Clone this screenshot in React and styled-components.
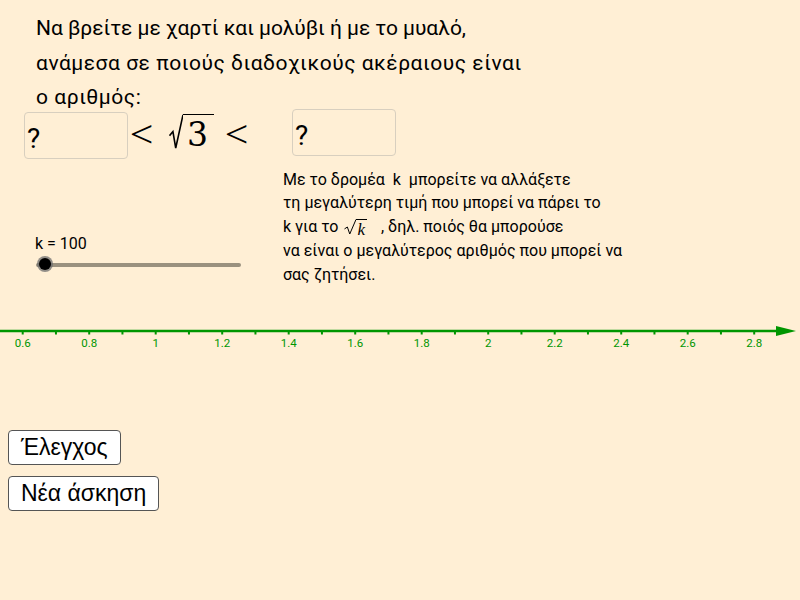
import React from "react";
import styled, { createGlobalStyle } from "styled-components";

const Global = createGlobalStyle`
  html, body { margin: 0; padding: 0; background: #FFEFD5; }
  body { font-family: Roboto, "Noto Sans", sans-serif; color: #000; }
`;

const Page = styled.div`
  width: 800px;
  height: 600px;
  background: #FFEFD5;
  overflow: hidden;
  display: flex;
  flex-direction: column;
`;

const Title = styled.div`
  padding: 11px 0 0 36px;
  font-family: Roboto, sans-serif;
  font-size: 21px;
  line-height: 34.5px;
`;

const TitleLine = styled.div`
  letter-spacing: ${(p) => p.$spacing || 0}px;
  white-space: nowrap;
`;

const AnswerRow = styled.div`
  display: flex;
  align-items: flex-start;
  margin-top: -6px;
  height: 50px;
`;

const AnswerBox = styled.div`
  box-sizing: border-box;
  width: 104px;
  height: 47px;
  margin-left: ${(p) => p.$left}px;
  margin-top: ${(p) => p.$top}px;
  border: 1px solid #d8cfbf;
  border-radius: 4px;
  padding: 12px 0 0 2px;
  font-family: Roboto, sans-serif;
  font-size: 28px;
  line-height: 1;
`;

const MathExpr = styled.div`
  display: flex;
  align-items: flex-start;
  margin: 5px 0 0 2px;
  width: 124px;
  height: 40px;
`;

const Rel = styled.span`
  display: inline-block;
  width: 23px;
  margin-top: ${(p) => p.$top}px;
  text-align: center;
  font-family: "Liberation Serif", "DejaVu Serif", serif;
  font-size: 38px;
  line-height: 1;
  transform: scaleX(1.1);
`;

const Sqrt = styled.span`
  display: inline-flex;
  align-items: flex-start;
  margin: 0 ${(p) => p.$mr || 0}px 0 ${(p) => p.$ml || 0}px;
  vertical-align: ${(p) => p.$va || "baseline"};
`;

const Radicand = styled.span`
  border-top: ${(p) => p.$thick}px solid #000;
  padding: ${(p) => p.$pt}px ${(p) => p.$pr}px 0 ${(p) => p.$pl}px;
  line-height: 1;
  font-size: ${(p) => p.$size}px;
  font-style: ${(p) => (p.$italic ? "italic" : "normal")};
  font-family: ${(p) =>
    p.$italic ? `"Liberation Serif", "DejaVu Serif", serif` : `"DejaVu Serif", "Liberation Serif", serif`};
`;

const Middle = styled.div`
  display: flex;
  margin-top: 9px;
`;

const SliderCol = styled.div`
  width: 283px;
  padding-top: 67px;
  box-sizing: border-box;
`;

const SliderLabel = styled.div`
  padding-left: 35px;
  font-size: 16px;
  line-height: 17px;
`;

const SliderTrack = styled.div`
  position: relative;
  margin: 11px 0 0 36px;
  width: 205px;
  height: 4px;
  background: #9a917f;
  border-radius: 2px;
`;

const Knob = styled.div`
  position: absolute;
  left: 3px;
  top: -5px;
  width: 12px;
  height: 12px;
  border-radius: 50%;
  background: #000;
  box-shadow: 0 0 0 2px rgba(110, 110, 110, 0.75);
`;

const Hint = styled.div`
  font-size: 16px;
  line-height: 23.75px;
  white-space: pre;
`;

const Axis = styled.svg`
  display: block;
  margin-top: 33px;
`;

const Buttons = styled.div`
  display: flex;
  flex-direction: column;
  align-items: flex-start;
  gap: 11px;
  margin: 75px 0 0 8px;
`;

const Button = styled.button`
  box-sizing: border-box;
  height: 35px;
  padding: 0 12px;
  background: #fff;
  border: 1px solid #555;
  border-radius: 4px;
  font-family: "Liberation Sans", Arial, sans-serif;
  font-size: 23px;
  color: #000;
  line-height: 1;
  cursor: pointer;
`;

const Radical = ({ w, h, sw }) => (
  <svg width={w} height={h} viewBox={`0 0 ${w} ${h}`} style={{ display: "block" }}>
    <path
      d={`M0.5 ${h * 0.62} L${w * 0.28} ${h * 0.5} L${w * 0.48} ${h - 1} L${w} ${sw / 2}`}
      fill="none"
      stroke="#000"
      strokeWidth={sw}
      strokeLinejoin="miter"
    />
  </svg>
);

const GREEN = "#009600";
const x0 = 22.7;
const unit = 332.5;
const px = (v) => x0 + (v - 0.6) * unit;

function NumberLine() {
  const ticks = [];
  for (let i = 6; i <= 28; i++) ticks.push(i / 10);
  const labels = [0.6, 0.8, 1, 1.2, 1.4, 1.6, 1.8, 2, 2.2, 2.4, 2.6, 2.8];
  return (
    <Axis width="800" height="36" viewBox="0 0 800 36">
      <line x1="0" y1="12" x2="780" y2="12" stroke={GREEN} strokeWidth="2.5" />
      {ticks.map((t) => (
        <line key={t} x1={px(t)} y1="12" x2={px(t)} y2="15.5" stroke={GREEN} strokeWidth="2" />
      ))}
      <polygon points="776,7 796,12 776,17" fill={GREEN} />
      {labels.map((l) => (
        <text
          key={l}
          x={px(l)}
          y="28"
          fill={GREEN}
          fontSize="11.5"
          textAnchor="middle"
          fontFamily="Roboto, sans-serif"
        >
          {String(l)}
        </text>
      ))}
    </Axis>
  );
}

export default function App() {
  return (
    <>
      <Global />
      <Page>
        <Title>
          <TitleLine $spacing={-0.05}>Να βρείτε με χαρτί και μολύβι ή με το μυαλό,</TitleLine>
          <TitleLine $spacing={0.52}>ανάμεσα σε ποιούς διαδοχικούς ακέραιους είναι</TitleLine>
          <TitleLine $spacing={0.55}>ο αριθμός:</TitleLine>
        </Title>
        <AnswerRow>
          <AnswerBox $left={24} $top={3}>?</AnswerBox>
          <MathExpr>
            <Rel $top={1}>&lt;</Rel>
            <Sqrt $ml={16} $mr={11}>
              <Radical w={14} h={35} sw={1.6} />
              <Radicand $thick={1.6} $pt={3} $pl={4} $pr={6} $size={33}>3</Radicand>
            </Sqrt>
            <Rel $top={1}>&lt;</Rel>
          </MathExpr>
          <AnswerBox $left={38} $top={0}>?</AnswerBox>
        </AnswerRow>
        <Middle>
          <SliderCol>
            <SliderLabel>k = 100</SliderLabel>
            <SliderTrack>
              <Knob />
            </SliderTrack>
          </SliderCol>
          <Hint>
            <div>Με το δρομέα  k  μπορείτε να αλλάξετε</div>
            <div>τη μεγαλύτερη τιμή που μπορεί να πάρει το</div>
            <div>
              k για το{" "}
              <Sqrt $ml={2} $mr={14} $va="-3px">
                <Radical w={12} h={16} sw={1} />
                <Radicand $thick={1} $pt={1} $pl={1} $pr={2} $size={17} $italic>
                  k
                </Radicand>
              </Sqrt>
              , δηλ. ποιός θα μπορούσε
            </div>
            <div>να είναι ο μεγαλύτερος αριθμός που μπορεί να</div>
            <div>σας ζητήσει.</div>
          </Hint>
        </Middle>
        <NumberLine />
        <Buttons>
          <Button>Έλεγχος</Button>
          <Button>Νέα άσκηση</Button>
        </Buttons>
      </Page>
    </>
  );
}
